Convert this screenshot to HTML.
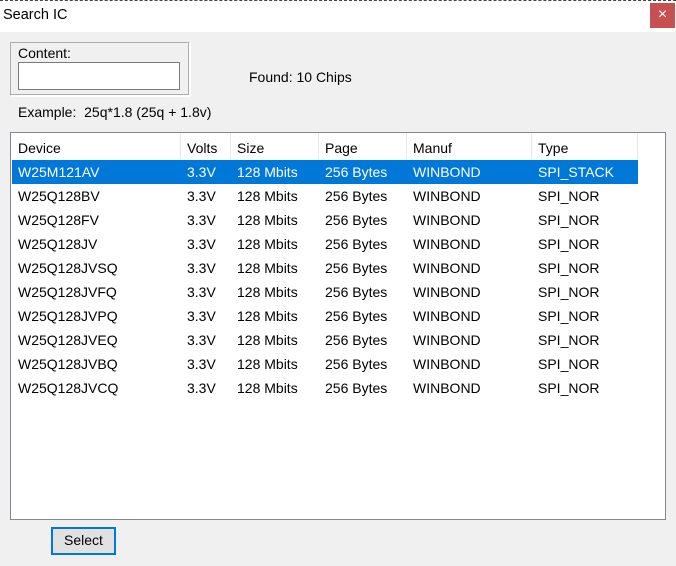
<!DOCTYPE html>
<html><head><style>
*{margin:0;padding:0;box-sizing:border-box}
body{width:676px;height:566px;background:#f0f0f0;font-family:"Liberation Sans",sans-serif;font-size:14px;color:#000;position:relative;overflow:hidden}
.a{position:absolute;white-space:nowrap}
.title{left:0;top:0;width:676px;height:32px;background:#fff;border-top:1px dashed #444}
.close{left:650px;top:3px;width:25px;height:25px;background:#c75050;color:#fff;text-align:center;line-height:24px;font-size:16px}
.grp{left:10px;top:42px;width:180px;height:54px;border:1px solid #adadad;border-right-color:#fff;border-bottom-color:#fff;box-shadow:inset -1px -1px 0 #adadad, 1px 1px 0 #fff}
.inp{left:18px;top:62px;width:162px;height:28px;background:#fff;border:1px solid #7a7a7a}
.list{left:10px;top:132px;width:656px;height:388px;background:#fff;border:1px solid #828790}
.sep{top:134px;width:1px;height:25px;background:#e5e5e5}
.sel{left:12px;top:160px;width:626px;height:24px;background:#0078d7}
.btn{left:51px;top:527px;width:65px;height:28px;border:2px solid #0078d7;background:#e1e1e1;text-align:center;line-height:23px}
.row{left:0;width:676px;height:24px}
.row span{position:absolute;top:4px}
</style></head><body>
<div class="a title"></div>
<div class="a" style="left:3px;top:7px;font-size:14.5px">Search IC</div>
<div class="a close">×</div>
<div class="a grp"></div>
<div class="a" style="left:18px;top:45px">Content:</div>
<div class="a inp"></div>
<div class="a" style="left:249px;top:69px">Found: 10 Chips</div>
<div class="a" style="left:18px;top:104px">Example:&nbsp; 25q*1.8 (25q + 1.8v)</div>
<div class="a list"></div>
<div class="a sep" style="left:180px"></div>
<div class="a sep" style="left:230px"></div>
<div class="a sep" style="left:318px"></div>
<div class="a sep" style="left:406px"></div>
<div class="a sep" style="left:531px"></div>
<div class="a sep" style="left:637px"></div>
<div class="a sel"></div>
<div class="a row" style="top:136px"><span style="left:18px">Device</span><span style="left:187px">Volts</span><span style="left:237px">Size</span><span style="left:325px">Page</span><span style="left:413px">Manuf</span><span style="left:538px">Type</span></div>
<div class="a row" style="top:160px;color:#fff"><span style="left:18px">W25M121AV</span><span style="left:187px">3.3V</span><span style="left:237px">128 Mbits</span><span style="left:325px">256 Bytes</span><span style="left:413px">WINBOND</span><span style="left:538px">SPI_STACK</span></div>
<div class="a row" style="top:184px"><span style="left:18px">W25Q128BV</span><span style="left:187px">3.3V</span><span style="left:237px">128 Mbits</span><span style="left:325px">256 Bytes</span><span style="left:413px">WINBOND</span><span style="left:538px">SPI_NOR</span></div>
<div class="a row" style="top:208px"><span style="left:18px">W25Q128FV</span><span style="left:187px">3.3V</span><span style="left:237px">128 Mbits</span><span style="left:325px">256 Bytes</span><span style="left:413px">WINBOND</span><span style="left:538px">SPI_NOR</span></div>
<div class="a row" style="top:232px"><span style="left:18px">W25Q128JV</span><span style="left:187px">3.3V</span><span style="left:237px">128 Mbits</span><span style="left:325px">256 Bytes</span><span style="left:413px">WINBOND</span><span style="left:538px">SPI_NOR</span></div>
<div class="a row" style="top:256px"><span style="left:18px">W25Q128JVSQ</span><span style="left:187px">3.3V</span><span style="left:237px">128 Mbits</span><span style="left:325px">256 Bytes</span><span style="left:413px">WINBOND</span><span style="left:538px">SPI_NOR</span></div>
<div class="a row" style="top:280px"><span style="left:18px">W25Q128JVFQ</span><span style="left:187px">3.3V</span><span style="left:237px">128 Mbits</span><span style="left:325px">256 Bytes</span><span style="left:413px">WINBOND</span><span style="left:538px">SPI_NOR</span></div>
<div class="a row" style="top:304px"><span style="left:18px">W25Q128JVPQ</span><span style="left:187px">3.3V</span><span style="left:237px">128 Mbits</span><span style="left:325px">256 Bytes</span><span style="left:413px">WINBOND</span><span style="left:538px">SPI_NOR</span></div>
<div class="a row" style="top:328px"><span style="left:18px">W25Q128JVEQ</span><span style="left:187px">3.3V</span><span style="left:237px">128 Mbits</span><span style="left:325px">256 Bytes</span><span style="left:413px">WINBOND</span><span style="left:538px">SPI_NOR</span></div>
<div class="a row" style="top:352px"><span style="left:18px">W25Q128JVBQ</span><span style="left:187px">3.3V</span><span style="left:237px">128 Mbits</span><span style="left:325px">256 Bytes</span><span style="left:413px">WINBOND</span><span style="left:538px">SPI_NOR</span></div>
<div class="a row" style="top:376px"><span style="left:18px">W25Q128JVCQ</span><span style="left:187px">3.3V</span><span style="left:237px">128 Mbits</span><span style="left:325px">256 Bytes</span><span style="left:413px">WINBOND</span><span style="left:538px">SPI_NOR</span></div>
<div class="a btn">Select</div>
</body></html>
